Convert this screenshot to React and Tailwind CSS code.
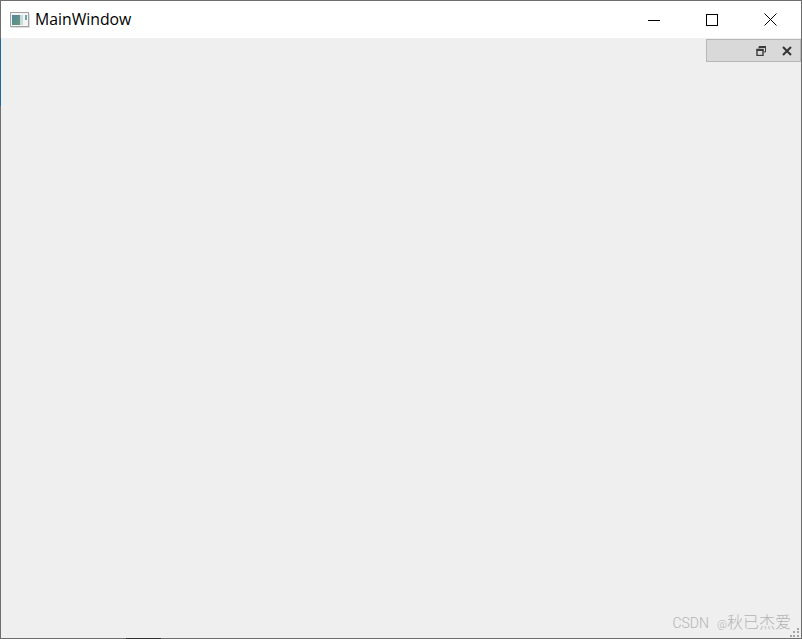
import React from 'react';

const TitleIcon = () => (
  <svg width="20" height="16" viewBox="0 0 20 16" className="shrink-0">
    <defs>
      <linearGradient id="pane" x1="0" y1="0" x2="1" y2="1">
        <stop offset="0" stopColor="#4f86a0" />
        <stop offset="1" stopColor="#6a9a78" />
      </linearGradient>
    </defs>
    <rect x="0.5" y="0.5" width="18" height="14" fill="#f4f4f4" stroke="#a3a3a3" />
    <rect x="2" y="3" width="8" height="10" fill="url(#pane)" />
    <rect x="10" y="3" width="3" height="10" fill="#c9dcdc" />
    <rect x="15" y="3" width="2" height="5" fill="#6fa3ad" />
    <path d="M1 15.5H19.5V2" fill="none" stroke="#dcdcdc" />
  </svg>
);

const Minimize = () => (
  <svg width="12" height="12" viewBox="0 0 12 12">
    <path d="M0 6.5H12" stroke="#000" fill="none" />
  </svg>
);

const Maximize = () => (
  <svg width="12" height="12" viewBox="0 0 12 12">
    <rect x="0.5" y="0.5" width="11" height="11" stroke="#000" fill="none" />
  </svg>
);

const Close = () => (
  <svg width="13" height="13" viewBox="0 0 13 13">
    <path d="M0.5 0.5L12.5 12.5M12.5 0.5L0.5 12.5" stroke="#000" fill="none" />
  </svg>
);

const FloatIcon = () => (
  <svg width="10" height="10" viewBox="0 0 10 10">
    <path d="M3 2.5V0.5H9.5V6H7.5" stroke="#3c3c3c" fill="none" />
    <rect x="3" y="0" width="7" height="2" fill="#3c3c3c" />
    <rect x="1" y="3.5" width="6" height="6" stroke="#3c3c3c" strokeWidth="1.4" fill="none" />
    <rect x="0.5" y="3" width="7" height="2" fill="#3c3c3c" />
  </svg>
);

const DockClose = () => (
  <svg width="10" height="10" viewBox="0 0 10 10">
    <path d="M1 1L9 9M9 1L1 9" stroke="#333" strokeWidth="2" fill="none" />
  </svg>
);

const gripDots = [
  'col-start-3 row-start-1',
  'col-start-2 row-start-2',
  'col-start-3 row-start-2',
  'col-start-1 row-start-3',
  'col-start-2 row-start-3',
  'col-start-3 row-start-3'
];

export default function App() {
  return (
    <div className="relative flex h-[639px] w-[802px] flex-col border border-[#6e6e6e] bg-[#efefef] font-['Open_Sans',sans-serif]">
      <div className="absolute -left-px top-[38px] h-[67px] w-px bg-[#1a6aa0]" />
      <div className="absolute -bottom-px left-[125px] h-px w-[35px] bg-[#2f2f2f]" />

      <div className="flex h-[37px] shrink-0 items-center bg-white">
        <div className="ml-[9px] flex items-center gap-[5px]">
          <TitleIcon />
          <span className="text-[15.8px] text-black">MainWindow</span>
        </div>
        <div className="ml-auto mr-[2px] flex items-center">
          <div className="flex w-[58px] justify-center"><Minimize /></div>
          <div className="flex w-[58px] justify-center"><Maximize /></div>
          <div className="flex w-[58px] justify-center"><Close /></div>
        </div>
      </div>

      <div className="flex flex-1 flex-col pt-px">
        <div className="ml-auto flex h-[23px] w-[95px] items-center justify-end gap-[16px] border border-[#b6b6b6] bg-[#d9d9d9] pr-[8px]">
          <FloatIcon />
          <DockClose />
        </div>

        <div className="mt-auto flex items-end justify-end pb-px pr-[2px]">
          <span className="-mr-[1px] mb-[2px] flex items-baseline gap-[8px] font-['Roboto','Noto_Sans_CJK_SC',sans-serif] font-light text-[#b4b4b4]">
            <span className="text-[14px]">CSDN</span>
            <span className="flex items-baseline">
              <span className="text-[11px]">@</span>
              <span className="text-[16px]">秋已杰爱</span>
            </span>
          </span>
          <div className="grid h-[9px] w-[9px] grid-cols-3 grid-rows-3 gap-px">
            {gripDots.map((dot) => (
              <div key={dot} className={`h-[2px] w-[2px] bg-[#a4a4a4] ${dot}`} />
            ))}
          </div>
        </div>
      </div>
    </div>
  );
}
